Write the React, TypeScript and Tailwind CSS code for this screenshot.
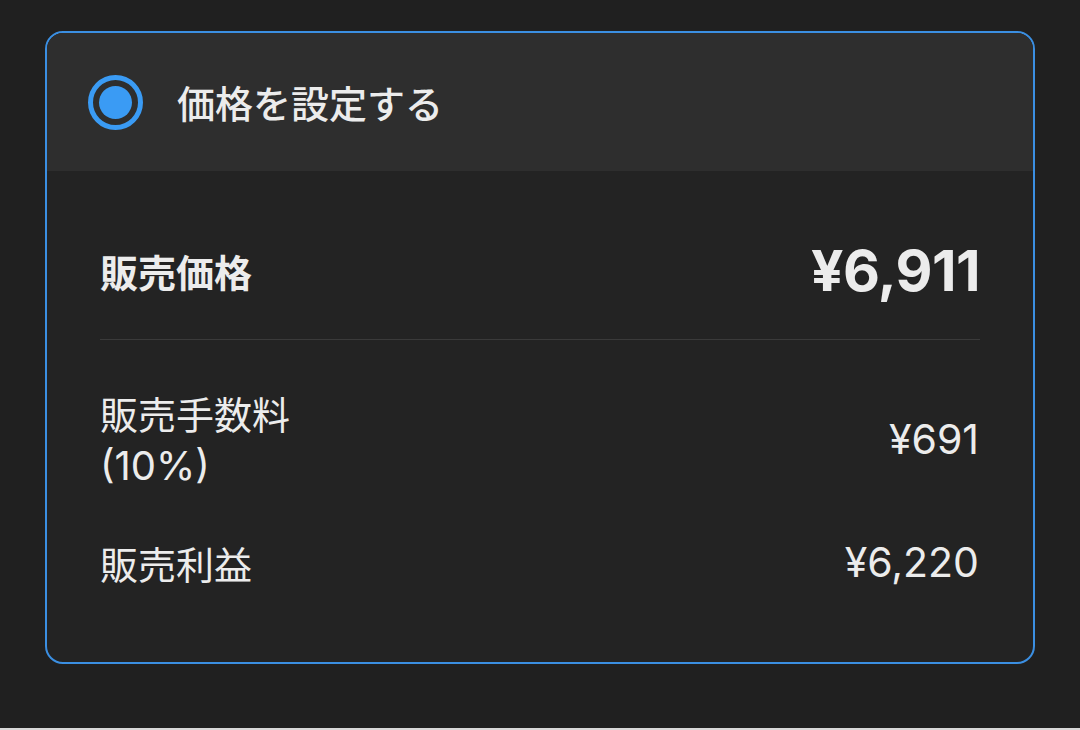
import React from 'react';

const jp = "font-['Noto_Sans_CJK_JP','Noto_Sans',sans-serif]";
const num = "font-['Inter','Noto_Sans_CJK_JP',sans-serif]";

function Radio() {
  return (
    <div className="flex h-[55px] w-[55px] items-center justify-center rounded-full border-[5px] border-[#3a9bf4]">
      <div className="h-[33px] w-[33px] rounded-full bg-[#3a9bf4]" />
    </div>
  );
}

export default function App() {
  return (
    <div className="flex h-[730px] w-full flex-col bg-[#202020]">
      <div className="flex-1 px-[45px] pt-[31px]">
        <div className="flex h-[633px] flex-col overflow-hidden rounded-[18px] border-2 border-[#3b8fe2] bg-[#232323] text-[#ececec]">
          {/* header */}
          <div className="flex h-[138px] items-center gap-[34px] bg-[#2e2e2e] pl-[41px]">
            <Radio />
            <span className={`${jp} text-[38px] font-medium leading-none`}>価格を設定する</span>
          </div>

          {/* body */}
          <div className="flex flex-col pl-[53px] pr-[54px]">
            <div className="flex items-center justify-between pb-[42px] pt-[74px]">
              <span className={`${jp} text-[38px] font-bold leading-[52px]`}>販売価格</span>
              <span className={`${num} -mr-px text-[57px] font-bold leading-[52px] tracking-[-0.01em]`}>¥6,911</span>
            </div>
            <div className="-mr-px h-px bg-[#3a3a3a]" />
            <div className="flex items-center justify-between pt-[46px]">
              <div className={`${jp} text-[38px] leading-[53px]`}>
                <div>販売手数料</div>
                <div className={`${num} text-[40px]`}>(10%)</div>
              </div>
              <span className={`${num} text-[41px] leading-[53px]`}>¥691</span>
            </div>
            <div className="flex items-center justify-between pt-[44px]">
              <span className={`${jp} text-[38px] leading-[53px]`}>販売利益</span>
              <span className={`${num} text-[41px] leading-[53px]`}>¥6,220</span>
            </div>
          </div>
        </div>
      </div>
      <div className="h-[2px] bg-[#d8d8d8]" />
    </div>
  );
}
